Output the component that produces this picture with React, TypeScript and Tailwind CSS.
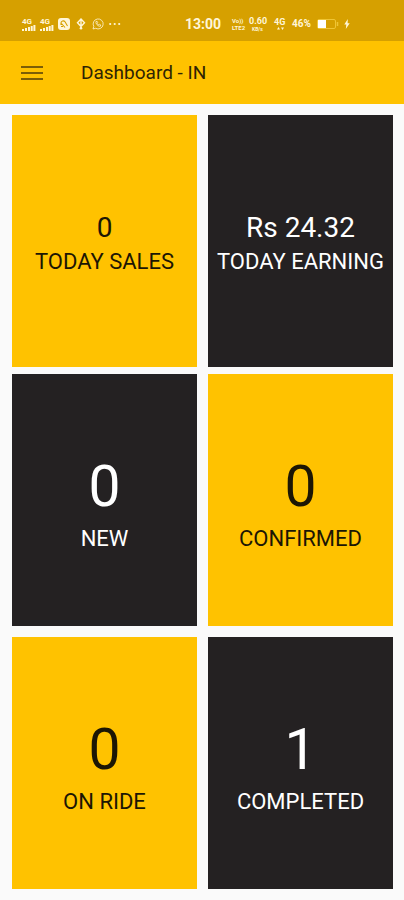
import React from "react";

type Tone = "amber" | "dark";

interface Stat {
  value: string;
  label: string;
  tone: Tone;
}

const earnings: Stat[] = [
  { value: "0", label: "TODAY SALES", tone: "amber" },
  { value: "Rs 24.32", label: "TODAY EARNING", tone: "dark" },
];

const rides: Stat[] = [
  { value: "0", label: "NEW", tone: "dark" },
  { value: "0", label: "CONFIRMED", tone: "amber" },
  { value: "0", label: "ON RIDE", tone: "amber" },
  { value: "1", label: "COMPLETED", tone: "dark" },
];

function StatCard({ stat, large = false }: { stat: Stat; large?: boolean }) {
  const tone =
    stat.tone === "amber" ? "bg-[#ffc200] text-[#1c1604]" : "bg-[#242122] text-white";
  const spacing = large ? "pt-[78px]" : "pt-24";
  const size = large ? "text-[57px] leading-[70px]" : "text-[28px] leading-[34px]";
  return (
    <section className={`flex min-h-[252px] flex-col items-center ${spacing} ${tone}`}>
      <p className={size}>{stat.value}</p>
      <h2 className="text-[22px] leading-[34px] whitespace-nowrap">{stat.label}</h2>
    </section>
  );
}

function Signal() {
  return (
    <div className="flex w-[14px] flex-col items-start">
      <span className="text-[8px] leading-[7px] font-bold">4G</span>
      <svg viewBox="0 0 14 6" className="h-[6px] w-[14px]" fill="currentColor" aria-hidden="true">
        <path d="M0 4h2v2H0zM3 3h2v3H3zM6 2h2v4H6zM8.7 1h2v5h-2zM11.4 0h2v6h-2z" />
      </svg>
    </div>
  );
}

function StatusBar() {
  return (
    <div className="flex h-[41px] items-center bg-[#d6a000] pt-[7px] pl-[22px] text-[#fff6d8]">
      <div className="flex w-[163px] items-center">
        <Signal />
        <div className="ml-1">
          <Signal />
        </div>
        <svg viewBox="0 0 12 12" className="ml-1 size-3" aria-hidden="true">
          <rect width="12" height="12" rx="3" fill="currentColor" />
          <path
            d="M3 7V5a2.2 2.2 0 0 1 4-1.200L9.500 8M3.500 5.500 7 9.500M3 8.500h2"
            fill="none"
            stroke="#d6a000"
            strokeWidth="1.1"
          />
        </svg>
        <svg viewBox="0 0 10 12" className="ml-[6px] h-3 w-[10px]" aria-hidden="true">
          <path
            d="M5 1 8.500 4.800 5 8.500 1.500 4.800zM5 3v7"
            fill="none"
            stroke="currentColor"
            strokeWidth="1.4"
          />
          <circle cx="5" cy="10.300" r="1.300" fill="currentColor" />
        </svg>
        <svg
          viewBox="0 0 12 12"
          className="ml-[6px] size-3"
          fill="none"
          stroke="currentColor"
          strokeWidth="0.800"
          aria-hidden="true"
        >
          <path d="M1 11l.8-2.600A5 5 0 1 1 3.700 10.300z" />
          <path d="M4 3.500c-.6 2 2 5 4.300 4.800l.5-1.300-1.300-.7-.8.700L5.200 5.500l.5-.9-.6-1.300z" />
        </svg>
        <svg viewBox="0 0 12 4" className="ml-[5px] h-1 w-3" fill="currentColor" aria-hidden="true">
          <circle cx="1.200" cy="2" r="1.100" />
          <circle cx="5.700" cy="2" r="1.100" />
          <circle cx="10.200" cy="2" r="1.100" />
        </svg>
      </div>
      <time className="w-[47px] text-[14px] leading-4 font-bold">13:00</time>
      <div className="w-[17px] text-[6px] leading-[7px] font-bold">
        <p>Vo))</p>
        <p>LTE2</p>
      </div>
      <div className="flex w-[25px] flex-col font-bold">
        <span className="text-[9px] leading-[9px]">0.60</span>
        <span className="pl-[3px] text-[5px] leading-[6px]">KB/s</span>
      </div>
      <div className="flex w-[18px] flex-col">
        <span className="text-[9px] leading-[8px] font-bold">4G</span>
        <svg viewBox="0 0 12 5" className="h-[5px] w-3" fill="currentColor" aria-hidden="true">
          <path d="M3 3.500 4.500 1 6 3.500zM7 1.500h3L8.500 4z" />
        </svg>
      </div>
      <span className="w-[25px] text-[10px] leading-4 font-bold">46%</span>
      <svg viewBox="0 0 22 12" className="h-3 w-[22px]" aria-hidden="true">
        <rect x="0.500" y="1.500" width="18" height="9" rx="1.500" fill="none" stroke="#efc535" />
        <path d="M1 2h8v8H1z" fill="#fff" />
        <path d="M20.500 4v4" stroke="#efc535" strokeWidth="1.500" />
      </svg>
      <svg viewBox="0 0 6 10" className="ml-[5px] h-[10px] w-[6px]" fill="currentColor" aria-hidden="true">
        <path d="M3.800 0 .3 5.500h2L1.800 10 5.700 4.300H3.600z" />
      </svg>
    </div>
  );
}

export default function App() {
  return (
    <div className="min-h-screen bg-[#fafafa] font-['Roboto',sans-serif]">
      <StatusBar />
      <header className="flex h-[63px] items-center bg-[#ffc200] pl-[21px]">
        <button type="button" aria-label="Open menu" className="text-[#7c5e06]">
          <svg viewBox="0 0 22 16" className="h-4 w-[22px]" fill="currentColor" aria-hidden="true">
            <path d="M0 1h22v2H0zM0 7h22v2H0zM0 13h22v2H0z" />
          </svg>
        </button>
        <h1 className="ml-[38px] text-[19px] leading-6 text-[#2e2404]">Dashboard - IN</h1>
      </header>
      <main className="flex flex-col gap-[7px] pt-[11px] pr-[11px] pb-[11px] pl-3">
        <div className="grid grid-cols-2 gap-[11px]">
          {earnings.map((stat) => (
            <StatCard key={stat.label} stat={stat} />
          ))}
        </div>
        <div className="grid grid-cols-2 gap-[11px]">
          {rides.map((stat) => (
            <StatCard key={stat.label} stat={stat} large />
          ))}
        </div>
      </main>
    </div>
  );
}
